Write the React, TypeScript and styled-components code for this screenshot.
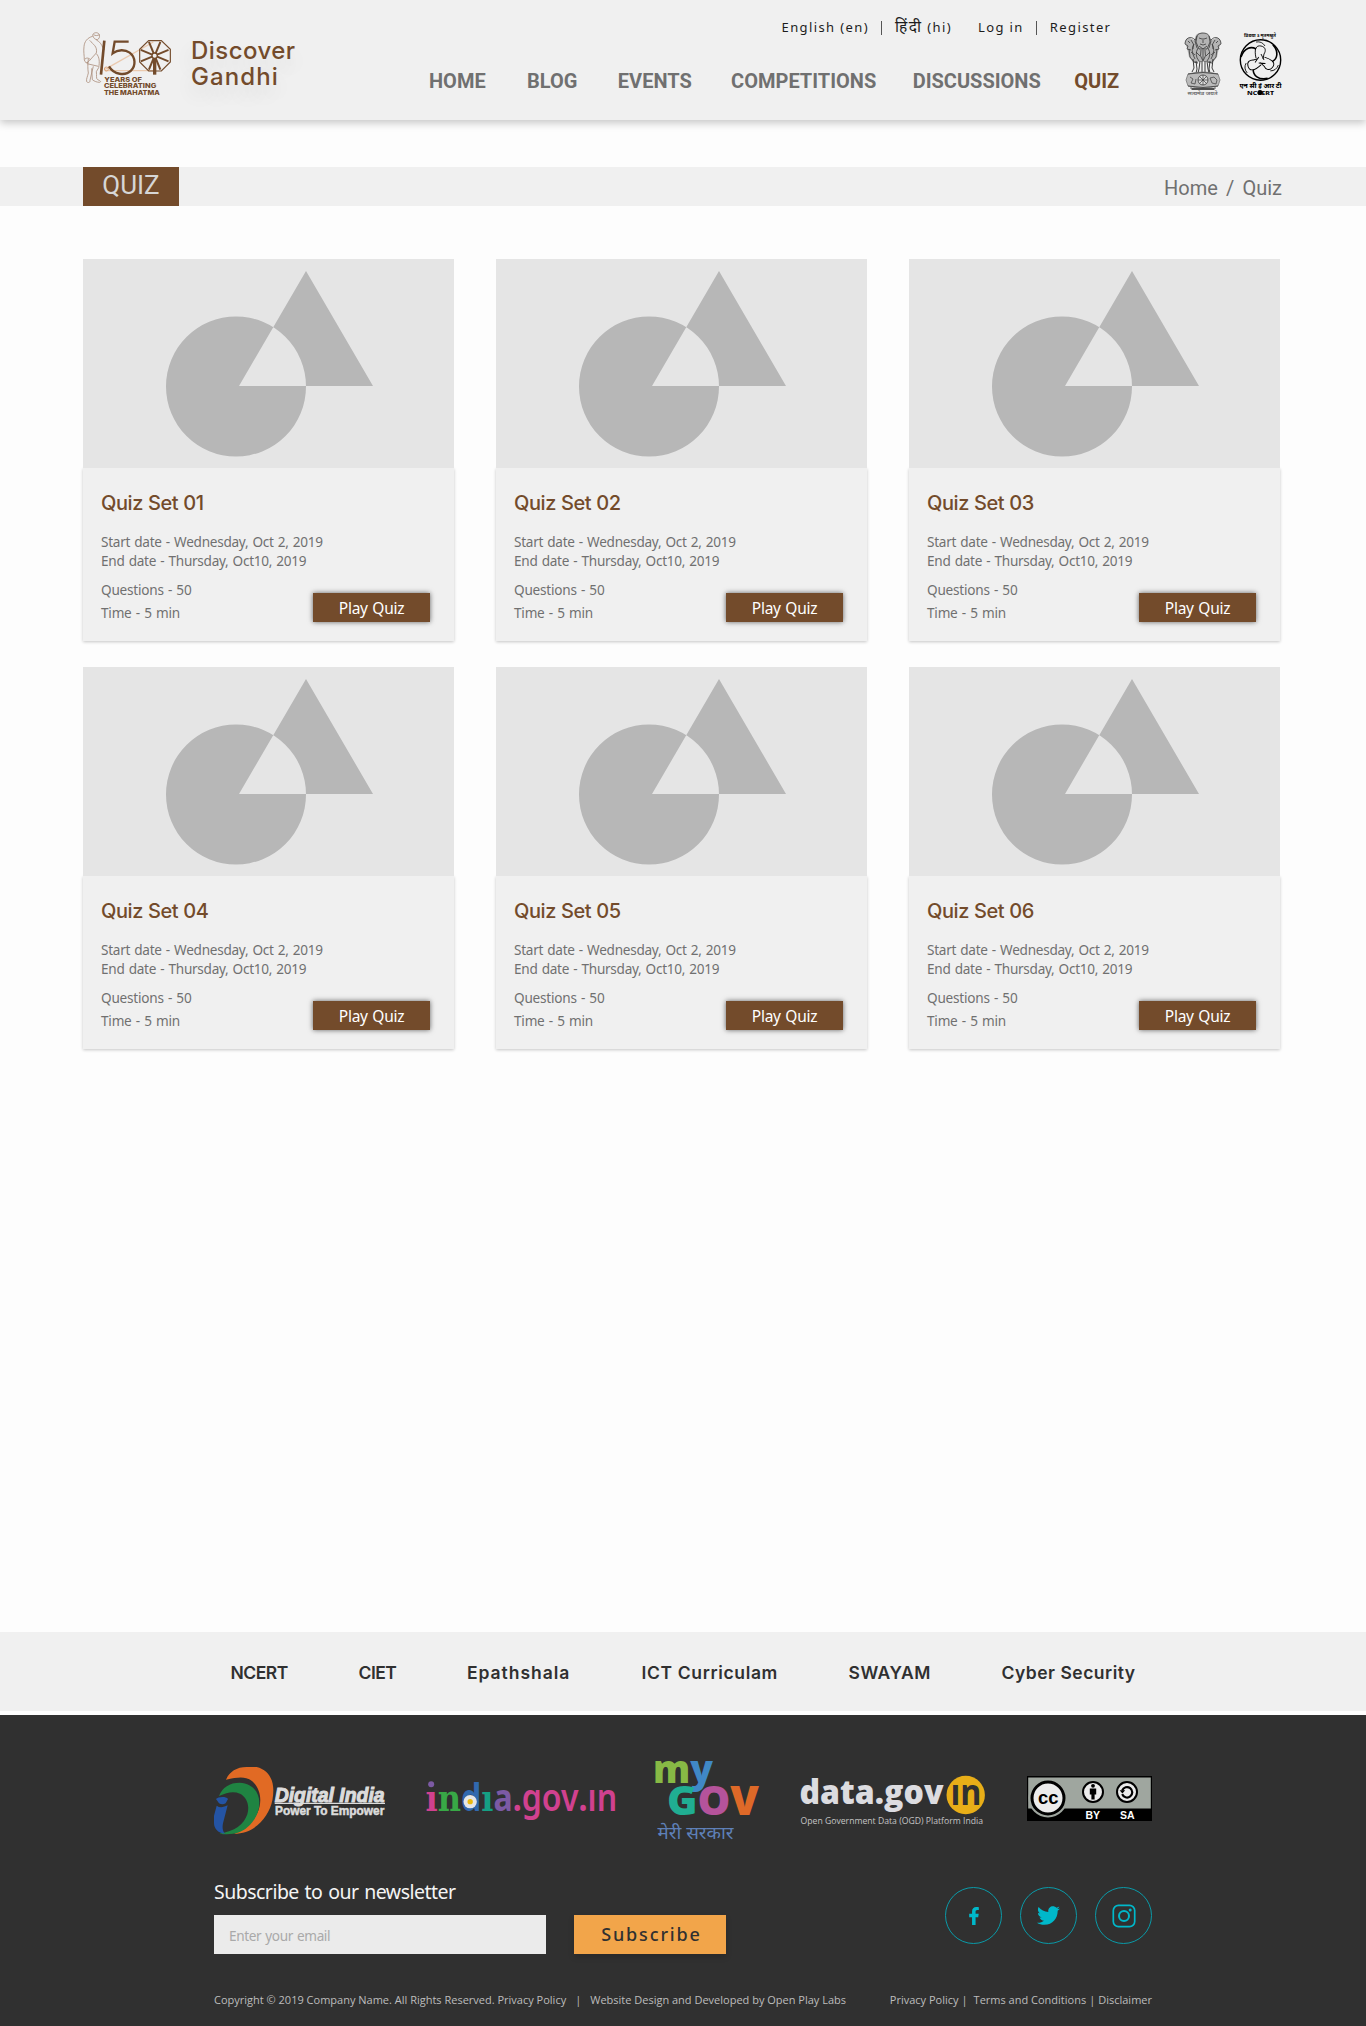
import React from "react";
import styled, { createGlobalStyle } from "styled-components";
import { FaFacebookF, FaTwitter } from "react-icons/fa";

const heading = "Inter, 'Liberation Sans', sans-serif";
const body = "'Noto Sans', 'Open Sans', sans-serif";
const roboto = "Roboto, 'Liberation Sans', sans-serif";
const brown = "#734b2b";

const GlobalStyle = createGlobalStyle`
  *, *::before, *::after { box-sizing: border-box; }
  body { margin: 0; background: #fdfdfd; font-family: ${body}; }
  a { color: inherit; text-decoration: none; }
  h1, h2, p { margin: 0; font-weight: inherit; }
  svg { display: block; }
`;

const Page = styled.div`
  display: flex;
  flex-direction: column;
  width: 1366px;
  min-height: 2026px;
`;

/* ---------- header ---------- */

const Header = styled.header`
  display: flex;
  align-items: flex-start;
  height: 120px;
  padding: 0 84px 0 83px;
  background: #f0f0f0;
  box-shadow: 0 3px 8px rgba(0, 0, 0, 0.22);
`;

const Brand = styled.a`
  display: flex;
  align-items: flex-start;
  gap: 19px;
  width: 346px;
  padding-top: 32px;
`;

const BrandName = styled.span`
  display: flex;
  flex-direction: column;
  padding-top: 6px;
  font: 500 24px/26px ${heading};
  color: ${brown};
  text-shadow: 0 10px 20px rgba(0, 0, 0, 0.12);
`;

const Spaced = styled.span<{ $ls: number }>`
  letter-spacing: ${(p) => p.$ls}px;
`;

const Menus = styled.div`
  display: flex;
  flex-direction: column;
  gap: 32px;
  padding-top: 17px;
`;

const Utility = styled.div`
  display: flex;
  align-items: center;
  height: 20px;
  padding-left: 352.5px;
  font: 400 13px/20px ${body};
  letter-spacing: 1.4px;
  color: #1d1d1d;
  white-space: nowrap;
`;

const Hindi = styled.span`
  font-size: 15.5px;
  line-height: 18px;
  letter-spacing: 1.4px;
`;

const UtilityGroup = styled.div`
  display: flex;
  align-items: center;
  & + & { margin-left: 26px; }
`;

const UtilityDivider = styled.i`
  width: 1px;
  height: 14px;
  margin: 2px 13px 0 12px;
  background: #555;
`;

const Nav = styled.nav`
  display: flex;
  font: 700 20px/24px ${roboto};
`;

const NavLink = styled.a<{ $gap: number; $active?: boolean }>`
  margin-left: ${(p) => p.$gap}px;
  color: ${(p) => (p.$active ? brown : "#707070")};
`;

const Emblems = styled.div`
  display: flex;
  gap: 17px;
  margin-left: auto;
  padding-top: 32px;
`;

/* ---------- title band ---------- */

const TitleBand = styled.div`
  display: flex;
  justify-content: space-between;
  height: 39px;
  margin-top: 47px;
  padding: 0 84px 0 83px;
  background: #f0f0f0;
`;

const Title = styled.h1`
  width: 96px;
  background: ${brown};
  color: #d6d6d6;
  font: 400 26px/36px ${roboto};
  text-align: center;
`;

const Breadcrumb = styled.nav`
  display: flex;
  gap: 8.2px;
  padding-top: 9px;
  font: 400 20px/24px ${roboto};
  color: #707070;
`;

/* ---------- cards ---------- */

const CardGrid = styled.main`
  display: grid;
  grid-template-columns: repeat(3, 371px);
  gap: 26px 42px;
  padding: 53px 83px 0;
`;

const Card = styled.article`
  display: flex;
  flex-direction: column;
`;

const CardArt = styled.svg`
  position: relative;
  width: 371px;
  height: 209px;
  background: #e5e5e5;
`;

const CardBody = styled.div`
  height: 173px;
  padding: 20px 24px 0 18px;
  background: #f0f0f0;
  box-shadow: 0 1px 3px rgba(0, 0, 0, 0.22);
  color: #707070;
`;

const CardTitle = styled.h2`
  font: 500 20px/30px ${heading};
  letter-spacing: -0.4px;
  color: ${brown};
`;

const CardDates = styled.div`
  margin-top: 14px;
  font-size: 13.6px;
  line-height: 19px;
  letter-spacing: -0.28px;
  word-spacing: 0.9px;
`;

const CardFooter = styled.div`
  display: flex;
  justify-content: space-between;
  align-items: flex-end;
  margin-top: 8px;
`;

const CardFacts = styled.div`
  font-size: 13.6px;
  line-height: 23px;
  letter-spacing: -0.22px;
  word-spacing: 0.9px;
`;

const PlayButton = styled.button`
  width: 117px;
  height: 29px;
  margin: 0 0 2px;
  padding: 2px 0 0;
  border: 0;
  background: ${brown};
  box-shadow: 0 0 5px rgba(0, 0, 0, 0.6);
  color: #fff;
  font: 400 15.5px/27px ${body};
  letter-spacing: -0.3px;
  word-spacing: 1px;
`;

/* ---------- partner links ---------- */

const LinkBar = styled.nav`
  display: grid;
  grid-template-columns: 128px 108.5px 174.5px 207px 153px auto;
  height: 79px;
  margin-top: auto;
  padding: 2px 0 0 230.5px;
  background: #f0f0f0;
  font: 600 17.5px/77px ${heading};
  color: #303030;
`;

/* ---------- footer ---------- */

const Footer = styled.footer`
  height: 311px;
  margin-top: 4px;
  padding: 46px 214px 0;
  background: #303030;
  color: #fff;
`;

const Logos = styled.div`
  display: flex;
  justify-content: space-between;
  align-items: center;
  height: 80px;
`;

const Logo = styled.svg<{ $w: number; $h: number; $lift?: number }>`
  flex: none;
  width: ${(p) => p.$w}px;
  height: ${(p) => p.$h}px;
  margin-bottom: ${(p) => p.$lift ?? 0}px;
  overflow: visible;
`;

const Contact = styled.div`
  display: flex;
  justify-content: space-between;
  margin-top: 37px;
`;

const NewsletterTitle = styled.p`
  padding-top: 1px;
  font-size: 19.5px;
  line-height: 26px;
  letter-spacing: -0.52px;
  word-spacing: 1.2px;
  color: #f4f4f4;
`;

const Form = styled.form`
  display: flex;
  gap: 28px;
  margin-top: 10px;
`;

const EmailInput = styled.input`
  width: 332px;
  height: 39px;
  padding: 1px 14px 0 15px;
  border: 0;
  background: #ebebeb;
  font: 400 13.6px/19px ${body};
  letter-spacing: -0.38px;
  word-spacing: 0.9px;
  &::placeholder { color: #a9a9a9; opacity: 1; }
`;

const SubscribeButton = styled.button`
  width: 152px;
  height: 39px;
  padding: 0 0 1px 3px;
  border: 0;
  background: #f2a54a;
  box-shadow: 0 3px 6px rgba(0, 0, 0, 0.16);
  color: #303030;
  font: 500 18px/37px ${body};
  letter-spacing: 1.85px;
`;

const Socials = styled.div`
  display: flex;
  gap: 18px;
  padding-top: 9px;
`;

const SocialLink = styled.a`
  display: flex;
  align-items: center;
  justify-content: center;
  width: 57px;
  height: 57px;
  border: 1px solid #0a9aa8;
  border-radius: 50%;
  color: #00b8ca;
`;

const Legal = styled.div`
  display: flex;
  justify-content: space-between;
  margin-top: 38px;
  font: 400 11px/16px 'Open Sans', sans-serif;
  color: #bdbdbd;
  white-space: nowrap;
`;

const LegalGroup = styled.div`
  display: flex;
`;

const Pipe = styled.span<{ $before: number; $after: number }>`
  margin: 0 ${(p) => p.$after}px 0 ${(p) => p.$before}px;
`;

/* ---------- drawings ---------- */

const Drawing = styled.svg`
  flex: none;
  overflow: visible;
`;

const spokes = [0, 45, 90, 135, 180, 225, 270, 315];

function GandhiLogo() {
  return (
    <Drawing width="89" height="64" viewBox="68 95 267 192" fill="none">
      <g stroke="#a98c78" strokeWidth="2.4" strokeLinejoin="round">
        <path d="M97 104c2-8 16-10 20-1 2 7-1 13-6 15-6 0-12-4-14-14zM100 103c5 4 12 3 17 0" />
        <path d="M97 108c-16 4-25 16-26 31-2 14 1 27 1 40 2 8 7 10 12 7M108 119c10 4 16 14 19 22 4 3 6 8 0 12M88 120c10 12 24 18 20 38l-20 22-9 8M84 176c-2 14-2 30 0 42-2 10-7 18-5 26 5 5 11 2 10-4l5-22 5-20M108 160c10 10 10 26 7 42l-7 12c2 12-2 20 4 24 8 4 12 6 6 8-8 0-16-3-22-8l-2-34M74 176c6-5 12-3 16 2M80 190l34 8" />
      </g>
      <path d="M279 125L134 207M279 211H134" stroke="#eac9ae" strokeWidth="4" />
      <circle cx="138" cy="206" r="6" stroke="#dca67c" strokeWidth="3" />
      <path d="M132 121l-10 102" stroke={brown} strokeWidth="8" />
      <path d="M205 124h-42l-6 35c16-12 37-12 51-2 18 14 19 39 4 54-17 17-52 12-66-13" stroke={brown} strokeWidth="7" />
      <path d="M265 121h38l27 26v38l-27 27h-38l-27-27v-38z" stroke={brown} strokeWidth="3.5" />
      <g stroke={brown} strokeWidth="6">
        {spokes.map((a) => (
          <path key={a} d="M283 160V121" transform={`rotate(${a + 22.5} 283 166)`} />
        ))}
      </g>
      <circle cx="283" cy="166" r="8" fill="#f0f0f0" stroke={brown} strokeWidth="4" />
      <path d="M278 176h10v47h-10z" fill={brown} />
      <g fill={brown} fontFamily={heading} fontWeight="800" fontSize="19">
        <text x="132" y="245" textLength="113" lengthAdjust="spacingAndGlyphs">YEARS OF</text>
        <text x="131" y="264.500" textLength="157" lengthAdjust="spacingAndGlyphs">CELEBRATING</text>
        <text x="131" y="284" textLength="167" lengthAdjust="spacingAndGlyphs">THE MAHATMA</text>
      </g>
    </Drawing>
  );
}

function StateEmblem() {
  return (
    <Drawing width="38" height="64" viewBox="0 0 38 64" fill="none" stroke="#3a3a3a" strokeWidth="0.8">
      <path d="M8 7C4 4 1 7 1 11l2 5 2 9 4 5h20l4-5 2-9 2-5c0-4-3-7-7-4l-4 1-2-5c-3-3-9-3-12 0l-2 5z" fill="#b4b4b4" stroke="none" />
      <path d="M13 4c1-4 11-4 12 0l1 6-3 7h-8l-3-7zM15 6l3 1M23 6l-3 1M19 6v5M16 12q3 2 6 0M15 14l4 3 4-3M13 4l-2 5 2 7M25 4l2 5-2 7" />
      <path d="M11 8C7 3 1 6 1 12l3 2-1 3 4 1M4 9l2 2M7 8q4 4 2 9M5 17l1 8 4 5M27 8c4-5 10-2 10 4l-3 2 1 3-4 1M34 9l-2 2M31 8q-4 4-2 9M33 17l-1 8-4 5" />
      <path d="M10 12q-4 6 1 15M14 16q-4 7 1 13M28 12q4 6-1 15M24 16q4 7-1 13M17 18q-2 6 2 11 4-5 2-11M12 20l4 4M26 20l-4 4M7 20l4 3M31 20l-4 3M19 18v10" />
      <path d="M9 27l1 9-2 4M12 29l1 8-1 4M16 29l-1 8-1 4M18 29v11M21 29v11M23 29l1 8 1 4M26 29l-1 8 1 4M29 27l-1 9 2 4M10 30l4 1M24 30l4 1" strokeWidth="1" />
      <path d="M4 42q15-4 30 0l2 6-2 6q-15 4-30 0l-2-6z" fill="#bababa" stroke="#777" />
      <path d="M4 42q15-3 30 0M4 54q15 3 30 0M7 55v2h24v-2" />
      <circle cx="19" cy="48" r="5" fill="#ddd" />
      <path d="M14 48h10M19 43v10M15.500 44.500l7 7M22.500 44.500l-7 7M6 45l3 2-2 4 4 1 1-5M26 46l4-1 3 3-1 4-4-1z" strokeWidth="0.7" />
      <path d="M8 57h22" strokeWidth="1.6" />
      <text x="3.500" y="63" fontSize="4.800" fontFamily={body} fontWeight="600" fill="#666" stroke="none" textLength="30" lengthAdjust="spacingAndGlyphs">सत्यमेव जयते</text>
    </Drawing>
  );
}

function NcertEmblem() {
  return (
    <Drawing width="43" height="64" viewBox="0 0 43 64" fill="none" stroke="#000">
      <text x="5" y="5" fontSize="5" fontFamily={body} fontWeight="700" fill="#000" stroke="none" textLength="32" lengthAdjust="spacingAndGlyphs">विद्यया ऽ मृतमश्नुते</text>
      <circle cx="21.500" cy="28" r="20.200" strokeWidth="1.4" />
      {[0, 120, 240].map((a) => (
        <g key={a} transform={`rotate(${a} 21.500 28)`}>
          <path d="M17 26c-2-9 0-13 5-12 5 1 5 5 3 8l-1 5M22 22l3 6" strokeWidth="0.9" />
          <path d="M2 25c3-9 10-11 15-8" strokeWidth="1.6" />
          <path d="M17 10q6-1 9 4" strokeWidth="0.8" />
        </g>
      ))}
      <g fill="#000" stroke="none" fontFamily={body} fontWeight="800">
        <text x="0.500" y="56" fontSize="6" textLength="42" lengthAdjust="spacingAndGlyphs">एन सी ई आर टी</text>
        <text x="8" y="63" fontSize="5.800" textLength="27" lengthAdjust="spacingAndGlyphs">NC●ERT</text>
      </g>
      <circle cx="21" cy="60.500" r="2.600" fill="#000" stroke="none" />
    </Drawing>
  );
}

function DigitalIndia() {
  return (
    <Logo $w={171} $h={67} $lift={2} viewBox="42 66 513 201">
      <path fill="#e16a24" d="M78 104C88 80 110 66 140 66h30c34 8 50 36 50 70 0 40-14 70-38 96-22 22-48 34-80 34 30-12 56-34 70-62 14-30 12-66-10-90-16-18-36-22-84-10z" />
      <path fill="#1f8442" d="M57 153c10-26 32-40 62-40 36 2 59 26 59 60 0 30-14 54-36 74-20 18-48 24-84 19 46-6 74-28 84-58 8-28-2-52-22-62-20-8-38-4-63 7z" />
      <path fill="#2454a4" d="M48 162c6-7 30-9 36 0l-7 13q-10 6-20 0zM50 182q8 6 18 4 8-1 15-5l-14 54c-3 14 0 26 6 31-22-2-33-16-33-32v-22z" />
      <g fill="#dcdcdc" stroke="#dcdcdc" fontFamily="'Liberation Sans', sans-serif" fontWeight="700">
        <text x="224" y="171" fontSize="60" fontStyle="italic" strokeWidth="3" textLength="330" lengthAdjust="spacingAndGlyphs">Digital India</text>
        <path d="M224 175h331" strokeWidth="4" />
        <text x="225" y="211" fontSize="36" strokeWidth="1.500" textLength="328" lengthAdjust="spacingAndGlyphs">Power To Empower</text>
      </g>
    </Logo>
  );
}

const serif = "'DejaVu Serif', serif";
const pink = "#d0418f";

function IndiaGov() {
  return (
    <Logo $w={189} $h={40} $lift={1} viewBox="682 105 566 120">
      <text
        x="680"
        y="196"
        fontSize="111"
        fontWeight="700"
        fontFamily={body}
        textLength="575"
        lengthAdjust="spacingAndGlyphs"
      >
        <tspan fill={pink} fontFamily={serif}>ı</tspan>
        <tspan fill="#38a846" fontFamily={serif}>n</tspan>
        <tspan fill="#3169ae">d</tspan>
        <tspan fill="#159f84" fontFamily={serif}>ı</tspan>
        <tspan fill="#7c5aa4">a</tspan>
        <tspan fill={pink}>.</tspan>
        <tspan fill={pink} fontWeight="600">gov</tspan>
        <tspan fill={pink}>.</tspan>
        <tspan fill={pink} fontWeight="600">ın</tspan>
      </text>
      <circle cx="697" cy="115" r="9" fill="#7c5aa4" />
      <circle cx="814" cy="167" r="20" fill="#e6e6e6" />
      <circle cx="814" cy="167" r="8" fill="#eab90f" />
    </Logo>
  );
}

function MyGov() {
  return (
    <Logo $w={104} $h={80} viewBox="656 1761 104 80" fontFamily="'Open Sans', sans-serif" fontWeight="800">
      <text x="653" y="1782.700" fontSize="39" textLength="60" lengthAdjust="spacingAndGlyphs">
        <tspan fill="#87b945">m</tspan>
        <tspan fill="#4088c6">y</tspan>
      </text>
      <text x="667" y="1815.200" fontSize="41" textLength="92" lengthAdjust="spacingAndGlyphs">
        <tspan fill="#20ae92">G</tspan>
        <tspan fill="#b5539b">O</tspan>
        <tspan fill="#de6928">V</tspan>
      </text>
      <text x="657.500" y="1838.500" fontSize="18" fontFamily={body} fontWeight="400" fill="#5e80b8" textLength="76" lengthAdjust="spacingAndGlyphs">मेरी सरकार</text>
    </Logo>
  );
}

function DataGov() {
  return (
    <Logo $w={185} $h={49} $lift={2} viewBox="801 1776 185 49" fontFamily="'Open Sans', sans-serif">
      <text x="799.500" y="1804" fontSize="33" fontWeight="800" fill="#dcdce0" textLength="144" lengthAdjust="spacingAndGlyphs">data.gov</text>
      <circle cx="965.700" cy="1795" r="19.200" fill="#e8ae18" />
      <text x="950.500" y="1804.500" fontSize="35" fontWeight="700" fill="#303030" textLength="31" lengthAdjust="spacingAndGlyphs">ın</text>
      <text x="800.500" y="1824" fontSize="9.300" fill="#c4c4c4" textLength="182.500" lengthAdjust="spacingAndGlyphs">Open Government Data (OGD) Platform India</text>
    </Logo>
  );
}

function CreativeCommons() {
  return (
    <Logo $w={125} $h={45} $lift={5} viewBox="0 0 125 45" fontFamily="'Liberation Sans', sans-serif" fontWeight="700">
      <path fill="#000" d="M0 0h125v45H0z" />
      <path fill="#9fa69f" d="M1.200 1.500h122.600v31H1.200z" />
      <circle cx="21" cy="22" r="19.500" fill="#9fa69f" />
      <circle cx="21" cy="22" r="16" fill="#ececec" stroke="#000" strokeWidth="3" />
      <text x="11" y="27.500" fontSize="19" textLength="20.500" lengthAdjust="spacingAndGlyphs">cc</text>
      <circle cx="66" cy="16" r="10" fill="#ececec" stroke="#000" strokeWidth="2" />
      <circle cx="66" cy="9.800" r="1.900" />
      <path d="M62.800 12.500h6.400v6h-1.600v5h-3.200v-5h-1.600z" />
      <circle cx="100" cy="16" r="10" fill="#ececec" stroke="#000" strokeWidth="2" />
      <path d="M95.200 14.500a5.200 5.200 0 1 1 0 3.600" fill="none" stroke="#000" strokeWidth="2.200" />
      <path d="M92.600 14.300h5.600l-2.800 3.200z" />
      <text x="58.500" y="42.500" fontSize="10.500" fill="#fff">BY</text>
      <text x="93" y="42.500" fontSize="10.500" fill="#fff">SA</text>
    </Logo>
  );
}

function InstagramGlyph() {
  return (
    <svg width="24" height="24" viewBox="0 0 24 24" fill="none" stroke="currentColor" strokeWidth="1.700">
      <rect x="1.300" y="1.300" width="21.400" height="21.400" rx="5.200" />
      <circle cx="12" cy="12" r="5" strokeWidth="2" />
      <circle cx="18.200" cy="5.900" r="1.500" fill="currentColor" stroke="none" />
    </svg>
  );
}

const navItems = [
  { label: "HOME", gap: 0 },
  { label: "BLOG", gap: 41.3 },
  { label: "EVENTS", gap: 40.5 },
  { label: "COMPETITIONS", gap: 39.3 },
  { label: "DISCUSSIONS", gap: 36.4 },
  { label: "QUIZ", gap: 33.5, active: true },
];

const partnerLinks = [
  { label: "NCERT", ls: -0.5 },
  { label: "CIET", ls: -0.5 },
  { label: "Epathshala", ls: 0.95 },
  { label: "ICT Curriculam", ls: 0.65 },
  { label: "SWAYAM", ls: 0.5 },
  { label: "Cyber Security", ls: 0.5 },
];

const quizzes = ["01", "02", "03", "04", "05", "06"];

export default function App() {
  return (
    <Page>
      <GlobalStyle />
      <Header>
        <Brand href="#">
          <GandhiLogo />
          <BrandName>
            <Spaced $ls={0.45}>Discover</Spaced>
            <Spaced $ls={1.1}>Gandhi</Spaced>
          </BrandName>
        </Brand>
        <Menus>
          <Utility>
            <UtilityGroup>
              <a href="#">English (en)</a>
              <UtilityDivider />
              <a href="#"><Hindi>हिंदी</Hindi> (hi)</a>
            </UtilityGroup>
            <UtilityGroup>
              <a href="#">Log in</a>
              <UtilityDivider />
              <a href="#">Register</a>
            </UtilityGroup>
          </Utility>
          <Nav>
            {navItems.map((n) => (
              <NavLink key={n.label} href="#" $gap={n.gap} $active={n.active}>
                {n.label}
              </NavLink>
            ))}
          </Nav>
        </Menus>
        <Emblems>
          <StateEmblem />
          <NcertEmblem />
        </Emblems>
      </Header>

      <TitleBand>
        <Title>QUIZ</Title>
        <Breadcrumb>
          <a href="#">Home</a>
          <span>/</span>
          <span>Quiz</span>
        </Breadcrumb>
      </TitleBand>

      <CardGrid>
        {quizzes.map((q) => (
          <Card key={q}>
            <CardArt viewBox="0 0 371 209">
              <path
                fill="#b7b7b7"
                fillRule="evenodd"
                d="M83 127.500a70 70 0 1 0 140 0a70 70 0 1 0-140 0zM223 12l67 115H156z"
              />
            </CardArt>
            <CardBody>
              <CardTitle>Quiz Set {q}</CardTitle>
              <CardDates>
                <p>Start date - Wednesday, Oct 2, 2019</p>
                <p>End date - Thursday, Oct10, 2019</p>
              </CardDates>
              <CardFooter>
                <CardFacts>
                  <p>Questions - 50</p>
                  <p>Time - 5 min</p>
                </CardFacts>
                <PlayButton>Play Quiz</PlayButton>
              </CardFooter>
            </CardBody>
          </Card>
        ))}
      </CardGrid>

      <LinkBar>
        {partnerLinks.map((l) => (
          <a key={l.label} href="#">
            <Spaced $ls={l.ls}>{l.label}</Spaced>
          </a>
        ))}
      </LinkBar>

      <Footer>
        <Logos>
          <DigitalIndia />
          <IndiaGov />
          <MyGov />
          <DataGov />
          <CreativeCommons />
        </Logos>
        <Contact>
          <div>
            <NewsletterTitle>Subscribe to our newsletter</NewsletterTitle>
            <Form>
              <EmailInput placeholder="Enter your email" />
              <SubscribeButton type="button">Subscribe</SubscribeButton>
            </Form>
          </div>
          <Socials>
            <SocialLink href="#" aria-label="Facebook">
              <FaFacebookF size={18} />
            </SocialLink>
            <SocialLink href="#" aria-label="Twitter">
              <FaTwitter size={23} />
            </SocialLink>
            <SocialLink href="#" aria-label="Instagram">
              <InstagramGlyph />
            </SocialLink>
          </Socials>
        </Contact>
        <Legal>
          <LegalGroup>
            <span>Copyright © 2019 Company Name. All Rights Reserved. Privacy Policy</span>
            <Pipe $before={9} $after={9}>|</Pipe>
            <span>Website Design and Developed by Open Play Labs</span>
          </LegalGroup>
          <LegalGroup>
            <a href="#">Privacy Policy</a>
            <Pipe $before={3} $after={6}>|</Pipe>
            <a href="#">Terms and Conditions</a>
            <Pipe $before={3} $after={3}>|</Pipe>
            <a href="#">Disclaimer</a>
          </LegalGroup>
        </Legal>
      </Footer>
    </Page>
  );
}
